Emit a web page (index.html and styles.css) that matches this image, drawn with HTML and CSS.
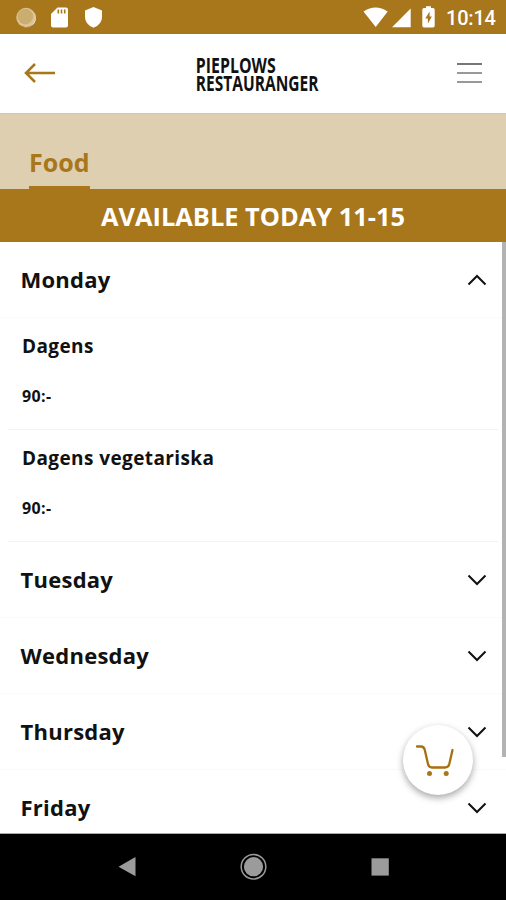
FILE: index.html
```html
<!DOCTYPE html>
<html lang="en">
<head>
<meta charset="utf-8">
<title>Pieplows Restauranger</title>
<link rel="stylesheet" href="styles.css">
</head>
<body>
<div class="phone">
  <div class="status">
    <svg width="120" height="34" viewBox="0 0 120 34">
      <circle cx="26" cy="17.500" r="9.700" fill="#dcc596"/>
      <path d="M33.500 11.500a9.700 9.700 0 0 1-10 15.300a9.400 9.400 0 0 0 10-15.300" fill="#fff"/>
      <circle cx="25.300" cy="16.600" r="7.800" fill="#ccad70"/>
      <path d="M57.500 7.500H66Q68 7.500 68 9.500V25.500Q68 27.500 66 27.500H53Q51 27.500 51 25.500V14Z" fill="#fff"/>
      <path d="M58.300 9.500v4M61.500 9.500v4M64.700 9.500v4" stroke="#a8761b" stroke-width="1.600"/>
      <path d="M93.500 7L102 10.500V17Q102 24.500 93.500 27.700Q85 24.500 85 17V10.500Z" fill="#fff"/>
    </svg>
    <div class="status-right">
      <svg width="78" height="34" viewBox="362 0 78 34" fill="#fff">
        <path d="M363.500 11.500Q375.500 3.500 387.700 11.500L375.700 27Z"/>
        <path d="M410.700 8.500V27.300H392Z"/>
        <path d="M426 8V6.300h5V8h2q1.700 0 1.700 1.700v16q0 1.700-1.700 1.700h-9q-1.700 0-1.700-1.700v-16Q422.300 8 424 8Z"/>
        <path d="M429.600 11.500l-4.300 7h2.600v5l4-7h-2.300z" fill="#a8761b"/>
      </svg>
      <span class="clock">10:14</span>
    </div>
  </div>

  <header class="header">
    <svg class="back" width="32" height="22" viewBox="0 0 32 22"><path d="M11 2L2 11l9 9M2 11h29" fill="none" stroke="#a8761b" stroke-width="2.500"/></svg>
    <svg class="logo" width="126" height="50" viewBox="0 0 126 50">
      <text transform="translate(.800 23.500) scale(.66 1)" textLength="121" lengthAdjust="spacingAndGlyphs">PIEPLOWS</text>
      <text transform="translate(.800 41.500) scale(.66 1)" textLength="186" lengthAdjust="spacingAndGlyphs">RESTAURANGER</text>
    </svg>
    <div class="burger"><i></i><i></i><i></i></div>
  </header>

  <nav class="tabs"><a class="tab">Food</a></nav>
  <div class="banner">AVAILABLE TODAY 11-15</div>

  <main class="list">
    <section class="day"><h2>Monday</h2><svg class="chev" viewBox="0 0 20 12"><path d="M1.500 10.500L10 2l8.500 8.500"/></svg></section>
    <article class="dish"><h3>Dagens</h3><p>90:-</p></article>
    <article class="dish"><h3>Dagens vegetariska</h3><p>90:-</p></article>
    <section class="day"><h2>Tuesday</h2><svg class="chev" viewBox="0 0 20 12"><path d="M1.500 1.500L10 10l8.500-8.500"/></svg></section>
    <section class="day"><h2>Wednesday</h2><svg class="chev" viewBox="0 0 20 12"><path d="M1.500 1.500L10 10l8.500-8.500"/></svg></section>
    <section class="day"><h2>Thursday</h2><svg class="chev" viewBox="0 0 20 12"><path d="M1.500 1.500L10 10l8.500-8.500"/></svg></section>
    <section class="day"><h2>Friday</h2><svg class="chev" viewBox="0 0 20 12"><path d="M1.500 1.500L10 10l8.500-8.500"/></svg></section>
    <div class="scrollbar"></div>
    <div class="cart">
      <svg width="70" height="70" viewBox="0 0 70 70">
        <path d="M14 21.500h4q3 0 3.800 3.500l3.200 14q.8 3.500 4 3.500H42q3.500 0 4.300-3.500L49.500 25" fill="none" stroke="#a8700f" stroke-width="2.300" stroke-linecap="round" stroke-linejoin="round"/>
        <circle cx="26.500" cy="48.500" r="2.500" fill="#a8761b"/><circle cx="43.200" cy="48.500" r="2.500" fill="#a8761b"/>
      </svg>
    </div>
  </main>

  <footer class="sysnav">
    <svg width="506" height="66" viewBox="0 834 506 66" fill="#9b9b9b">
      <path d="M118.500 866.700L135.500 857v19.300Z"/>
      <circle cx="253.500" cy="866.700" r="9.600"/>
      <circle cx="253.500" cy="866.700" r="12.300" fill="none" stroke="#9b9b9b" stroke-width="1.500"/>
      <rect x="371.500" y="858.300" width="17.300" height="17.300"/>
    </svg>
  </footer>
</div>
</body>
</html>
```

FILE: styles.css
```css
* { box-sizing: border-box; }
body { margin: 0; background: #fff; font-family: "Open Sans", sans-serif; color: #111; }
h2, h3, p { margin: 0; }
svg { display: block; }
.phone { width: 506px; height: 900px; display: flex; flex-direction: column; overflow: hidden; }

.status { height: 34px; flex: none; background: #a8761b; display: flex; justify-content: space-between; }
.status-right { display: flex; width: 144px; align-items: center; }
.clock { font: 500 20px/34px Roboto, sans-serif; color: #fff; margin-left: 6px; padding-top: 2px; letter-spacing: -.2px; }

.header { height: 79px; flex: none; display: flex; align-items: center; justify-content: space-between; padding: 0 24px; }
.back { margin-top: -2px; }
.logo { margin-left: 2px; overflow: visible; }
.logo text { font: 700 20.5px "Open Sans", sans-serif; fill: #111; }
.burger { width: 25px; height: 20px; margin-top: -1px; display: flex; flex-direction: column; justify-content: space-between; }
.burger i { height: 2px; background: #999; }
.burger i:first-child { background: #777; }

.tabs { height: 76px; flex: none; background: #decfb1; border-top: 1px solid #dac6a2; padding-left: 29px; display: flex; align-items: flex-end; }
.tab { height: 46px; border-bottom: 3px solid #a8761b; color: #a8761b; font-size: 25px; line-height: 38px; font-weight: 700; }
.banner { height: 53px; flex: none; background: #a8761b; color: #fff; text-align: center; font-size: 25.4px; line-height: 55px; font-weight: 700; }

.list { position: relative; flex: 1; overflow: hidden; border-bottom: 1px solid #aaa; }
.day { height: 76px; padding: 0 19.5px 0 20.5px; display: flex; align-items: center; justify-content: space-between; border-bottom: 1px solid #fafafa; }
.day h2 { font-size: 22px; line-height: 30px; font-weight: 700; letter-spacing: .25px; margin-top: -2px; }
.chev { width: 20px; height: 12px; fill: none; stroke: #111; stroke-width: 2; }
.dish { height: 112px; margin: 0 8px; padding: 14px 14px 0; border-bottom: 1px solid #f3f3f3; }
.dish h3 { font-size: 19px; line-height: 28px; font-weight: 700; letter-spacing: .4px; }
.dish p { font-size: 16px; line-height: 22px; font-weight: 700; letter-spacing: .4px; margin-top: 25px; }
.scrollbar { position: absolute; top: 0; right: 0; width: 4px; height: 515px; background: #b3b3b3; }
.cart { position: absolute; left: 403px; top: 483px; width: 70px; height: 70px; border-radius: 50%; background: #fff; box-shadow: 0 3px 7px rgba(0, 0, 0, .35); }

.sysnav { height: 66px; flex: none; background: #000; }
```
